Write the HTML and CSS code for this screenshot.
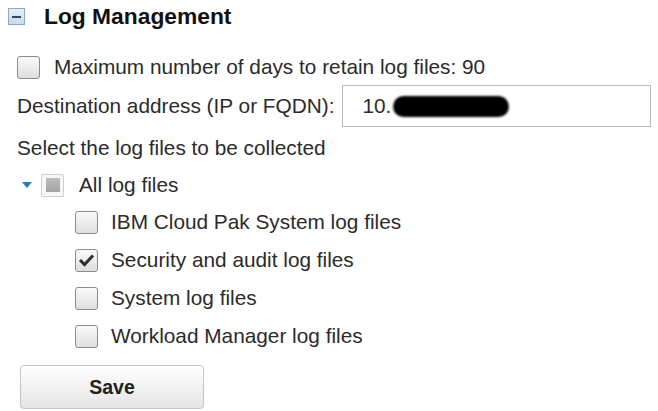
FILE: index.html
```html
<!DOCTYPE html>
<html>
<head>
<meta charset="utf-8">
<link rel="stylesheet" href="styles.css">
</head>
<body>
<div class="panel">
  <div class="header">
    <span class="collapse"><span class="minus"></span></span>
    <span class="title">Log Management</span>
  </div>
  <div class="row row-max">
    <span class="cb"></span>
    <span class="label">Maximum number of days to retain log files: 90</span>
  </div>
  <div class="row row-dest">
    <span class="label">Destination address (IP or FQDN):</span>
    <div class="input"><span>10.</span><span class="redact"></span></div>
  </div>
  <div class="row row-select">
    <span class="label">Select the log files to be collected</span>
  </div>
  <div class="row row-all">
    <span class="twisty"></span>
    <span class="cb cb-mixed"><span class="mixed"></span></span>
    <span class="label">All log files</span>
  </div>
  <div class="children">
    <div class="row row-child">
      <span class="cb"></span>
      <span class="label">IBM Cloud Pak System log files</span>
    </div>
    <div class="row row-child">
      <span class="cb"><svg class="check" viewBox="0 0 21 21" width="21" height="21"><path d="M4 10 L8.5 14.5 L17 5.5" fill="none" stroke="#2e2e2e" stroke-width="3"/></svg></span>
      <span class="label">Security and audit log files</span>
    </div>
    <div class="row row-child">
      <span class="cb"></span>
      <span class="label">System log files</span>
    </div>
    <div class="row row-child">
      <span class="cb"></span>
      <span class="label">Workload Manager log files</span>
    </div>
  </div>
  <div class="actions">
    <button class="btn">Save</button>
  </div>
</div>
</body>
</html>
```

FILE: styles.css
```css
html, body {
  margin: 0;
  padding: 0;
  background: #ffffff;
}
body {
  font-family: "Liberation Sans", Arial, sans-serif;
  font-size: 20.8px;
  color: #2b2b2b;
}
.panel {
  padding: 0 0 0 17px;
  width: 636px;
}
.header {
  display: flex;
  align-items: center;
  height: 33px;
  margin-left: -9px;
}
.collapse {
  width: 15px;
  height: 15px;
  border: 1px solid #8ea7c2;
  background: linear-gradient(#e6eef7, #c9d9ea);
  display: flex;
  align-items: center;
  justify-content: center;
  box-sizing: content-box;
}
.minus {
  width: 9px;
  height: 2px;
  background: #2f4660;
}
.title {
  margin-left: 19px;
  font-weight: bold;
  font-size: 22.8px;
  color: #111;
}
.row {
  display: flex;
  align-items: center;
}
.cb {
  width: 21px;
  height: 21px;
  border: 1px solid #8c8c8c;
  border-radius: 3px;
  background: linear-gradient(#fafafa, #dedede);
  flex: none;
  display: flex;
  align-items: center;
  justify-content: center;
}
.check {
  display: block;
}
.row-max {
  height: 32px;
  margin-top: 18px;
}
.row-max .label {
  margin-left: 14px;
}
.row-dest {
  height: 42px;
  margin-top: 2px;
}
.input {
  margin-left: 8px;
  width: 288px;
  height: 40px;
  border: 1px solid #b9b9b9;
  padding-left: 19px;
  display: flex;
  align-items: center;
}
.redact {
  display: inline-block;
  width: 116px;
  height: 21px;
  margin-left: 2px;
  background: #000;
  border-radius: 11px;
  filter: blur(1.2px);
}
.row-select {
  height: 30px;
  margin-top: 6px;
}
.row-all {
  height: 30px;
  margin-top: 7px;
}
.twisty {
  width: 0;
  height: 0;
  margin-left: 5px;
  border-left: 5.5px solid transparent;
  border-right: 5.5px solid transparent;
  border-top: 6px solid #1b82bd;
}
.cb-mixed {
  margin-left: 9px;
  border-color: #d0d0d0;
  border-radius: 1px;
  background: #f6f6f6;
}
.mixed {
  width: 14px;
  height: 14px;
  background: linear-gradient(#bdbdbd, #a2a2a2);
}
.row-all .label {
  margin-left: 15px;
}
.children {
  padding-left: 58px;
  margin-top: 3px;
}
.row-child {
  height: 38px;
}
.row-child .label {
  margin-left: 13px;
}
.actions {
  margin-top: 10px;
  padding-left: 3px;
}
.btn {
  width: 184px;
  height: 44px;
  border: 1px solid #c6c6c6;
  border-radius: 4px;
  background: linear-gradient(#ffffff, #e4e4e4);
  font-family: "Liberation Sans", Arial, sans-serif;
  font-weight: bold;
  font-size: 19.5px;
  color: #222;
  box-shadow: 0 1px 1px rgba(0,0,0,0.08);
}
```
